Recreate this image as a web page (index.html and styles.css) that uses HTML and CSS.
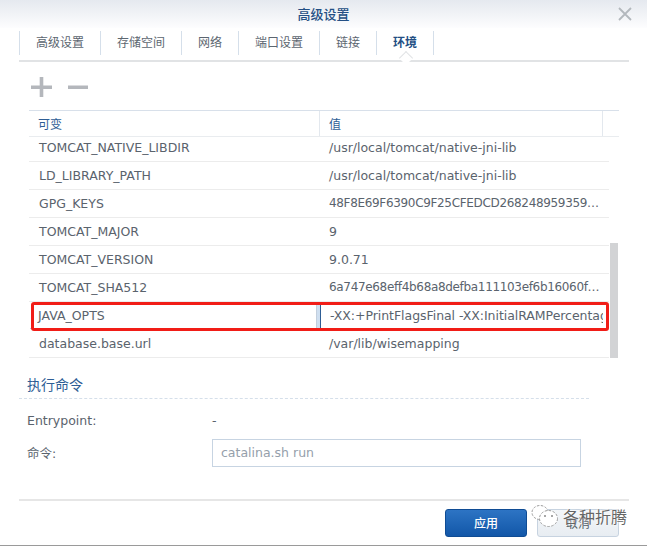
FILE: index.html
```html
<!DOCTYPE html>
<html lang="zh">
<head>
<meta charset="utf-8">
<title>高级设置</title>
<link rel="stylesheet" href="styles.css">
</head>
<body>
<div class="dialog">
  <header class="titlebar">
    <span class="title">高级设置</span>
    <svg class="close" width="14" height="14" viewBox="0 0 14 14"><path d="M1 1L13 13M13 1L1 13" stroke="#b3b8bd" stroke-width="1.800" fill="none"/></svg>
  </header>
  <nav class="tabs">
    <span class="tab">高级设置</span>
    <span class="tab">存储空间</span>
    <span class="tab">网络</span>
    <span class="tab">端口设置</span>
    <span class="tab">链接</span>
    <span class="tab active">环境</span>
  </nav>
  <div class="toolbar">
    <svg width="22" height="20" viewBox="0 0 22 20"><path d="M0 8.500h21v3.500H0zM8.700 0h3.600v20H8.700z" fill="#b4b7bc"/></svg>
    <svg width="22" height="20" viewBox="0 0 22 20"><path d="M1 8.500h20v3.500H1z" fill="#b4b7bc"/></svg>
  </div>
  <section class="grid">
    <div class="grid-head">
      <span class="hcell hname">可变</span>
      <span class="hcell hvalue">值</span>
      <span class="hcell hpad"></span>
    </div>
    <div class="grid-body">
      <div class="rows">
        <div class="row first"><span class="cell name">TOMCAT_NATIVE_LIBDIR</span><span class="cell value">/usr/local/tomcat/native-jni-lib</span></div>
        <div class="row"><span class="cell name">LD_LIBRARY_PATH</span><span class="cell value">/usr/local/tomcat/native-jni-lib</span></div>
        <div class="row"><span class="cell name">GPG_KEYS</span><span class="cell value hex">48F8E69F6390C9F25CFEDCD268248959359E722B A9C5DF4D22E99998D9875A5110C01C5A2F6059E7</span></div>
        <div class="row"><span class="cell name">TOMCAT_MAJOR</span><span class="cell value">9</span></div>
        <div class="row"><span class="cell name">TOMCAT_VERSION</span><span class="cell value">9.0.71</span></div>
        <div class="row"><span class="cell name">TOMCAT_SHA512</span><span class="cell value hex">6a747e68eff4b68a8defba111103ef6b16060f7d8e4b1d1c2e5a4b3f09d7c6a1</span></div>
        <div class="row editing">
          <span class="edit edit-name">JAVA_OPTS</span>
          <span class="edit-gap"></span>
          <span class="edit edit-value">-XX:+PrintFlagsFinal -XX:InitialRAMPercentage=70 -XX:MaxRAMPercentage=70</span>
          <span class="highlight"></span>
        </div>
        <div class="row"><span class="cell name">database.base.url</span><span class="cell value">/var/lib/wisemapping</span></div>
      </div>
      <div class="scrolltrack"><div class="scrollthumb"></div></div>
    </div>
  </section>
  <h2 class="section-title">执行命令</h2>
  <div class="form">
    <div class="form-row entry"><span class="label">Entrypoint:</span><span class="static">-</span></div>
    <div class="form-row cmd"><span class="label cmd-label">命令:</span><span class="input">catalina.sh run</span></div>
  </div>
  <footer class="footer">
    <span class="btn primary">应用</span>
    <span class="btn">取消</span>
    <div class="watermark">
      <svg width="28" height="24" viewBox="0 0 28 24"><g fill="#fff" stroke="#9b9b9b" stroke-width="1" stroke-dasharray="2.500 1.500"><ellipse cx="9" cy="8.500" rx="8" ry="7"/><ellipse cx="17.500" cy="14.500" rx="9" ry="8"/></g><circle cx="14" cy="12" r="1" fill="#8a8a8a"/><circle cx="21" cy="12" r="1" fill="#8a8a8a"/></svg>
      <span class="wm-text">各种折腾</span>
    </div>
  </footer>
</div>
</body>
</html>
```
FILE: styles.css
```css
* { box-sizing: border-box; }
html, body { margin: 0; padding: 0; }
body {
  width: 647px; height: 546px; overflow: hidden; background: #fff;
  font-family: "DejaVu Sans", "Noto Sans CJK SC", sans-serif;
  font-size: 12.500px; color: #5a636d;
}
.dialog { position: relative; width: 647px; height: 546px; border-bottom: 1px solid #9a9a9a; overflow: hidden; }
.titlebar {
  height: 28px; display: flex; justify-content: center; align-items: center; position: relative;
  background: linear-gradient(#e5e9ef, #fdfdfe);
  padding-bottom: 2px;
}
.title { font-size: 13px; color: #244f84; font-weight: 500; font-family: "Noto Sans CJK SC", sans-serif; }
.close { position: absolute; left: 618px; top: 7px; }
.tabs {
  margin: 3px 18px 0 19px; height: 31px; padding-bottom: 7px; display: flex;
  border-bottom: 2px solid #e1e3e5; position: relative;
}
.tab {
  height: 24px; line-height: 22px; padding: 0 16px; border-left: 1px solid #d5dfea;
  font-family: "Noto Sans CJK SC", sans-serif; font-size: 12px; color: #5c6670;
}
.tab.active { color: #244f84; font-weight: 700; border-right: 1px solid #d5dfea; position: relative; }
.tab.active::after {
  content: ""; position: absolute; left: 24px; bottom: -8px; width: 9px; height: 9px;
  background: #fff; border-left: 1px solid #e1e3e5; border-top: 1px solid #e1e3e5;
  transform: rotate(45deg);
}
.toolbar { margin: 15px 0 0 31px; height: 20px; display: flex; gap: 14px; }
.grid { margin: 13px 28px 0 29px; }
.grid-head { display: flex; height: 27px; border-top: 1px solid #d8e0ea; border-bottom: 1px solid #e9ecef; }
.hcell { font-family: "Noto Sans CJK SC", sans-serif; font-size: 12px; color: #2e5d95; line-height: 25px; padding-left: 9px; border-right: 1px solid #e3e8ee; }
.hname { width: 291px; }
.hvalue { width: 283px; }
.hpad { flex: 1; border-right: 0; }
.grid-body { display: flex; height: 221px; }
.rows { width: 580px; }
.row { display: flex; height: 28px; border-bottom: 1px solid #ececec; line-height: 27px; position: relative; }
.row.first { height: 25px; line-height: 21px; }
.cell { display: block; white-space: nowrap; overflow: hidden; text-overflow: ellipsis; padding: 0 6px 0 10px; }
.cell.name { width: 290px; }
.cell.value { width: 290px; }
.cell.hex { font-size: 12px; letter-spacing: -0.330px; }
.row.editing { border-bottom: 0; }
.edit { display: block; height: 27px; background: #fff; white-space: nowrap; overflow: hidden; line-height: 27px; border-bottom: 1px solid #c3cfdd; }
.edit-name { width: 287px; margin-left: 1px; padding-left: 8px; border-right: 1px solid #c3cfdd; }
.edit-gap { width: 4px; height: 27px; background: #cfdff0; border-right: 1px solid #2e5d95; }
.edit-value { width: 282px; padding-left: 9px; letter-spacing: -0.050px; }
.highlight { position: absolute; left: 2px; top: 0; width: 578px; height: 29px; border: 3px solid #f11d17; border-radius: 3px; pointer-events: none; }
.scrolltrack { width: 8px; margin-left: 1px; position: relative; }
.scrollthumb { position: absolute; left: 0; bottom: 0; width: 8px; height: 115px; background: #d2d3d5; }
.section-title { margin: 15px 0 0 27px; font-family: "Noto Sans CJK SC", sans-serif; font-size: 14px; font-weight: 400; color: #2e5d95; line-height: 22px; height: 25px; }
.form { margin: 0 0 0 19px; width: 570px; border-top: 1px dashed #d5dfea; padding: 13px 0 0 8px; }
.form-row { display: flex; align-items: center; }
.entry { height: 16px; }
.cmd { margin-top: 11px; height: 28px; }
.label { width: 185px; }
.cmd-label { margin-bottom: 2px; }
.input { width: 369px; height: 28px; line-height: 26px; padding-left: 8px; border: 1px solid #c7d4e2; color: #95a0ab; }
.footer { margin: 32px 18px 0 19px; border-top: 2px solid #e6e6e6; padding: 8px 10px 0 426px; display: flex; gap: 10px; position: relative; }
.btn { width: 82px; height: 28px; border: 1px solid #c7d3e0; border-radius: 3px; background: linear-gradient(#f3f6f9, #e8edf2); color: #505a64; text-align: center; line-height: 25px; font-size: 12px; font-family: "Noto Sans CJK SC", sans-serif; }
.btn.primary { background: linear-gradient(#2d74c4, #1257a8); border-color: #0f4c94; color: #fff; font-weight: 500; }
.watermark { position: absolute; left: 512px; top: 2px; display: flex; align-items: center; gap: 4px; height: 26px; }
.wm-text { font-family: "Noto Sans CJK SC", sans-serif; font-size: 16px; color: #666; text-shadow: 0 0 2px #fff, 0 0 2px #fff; white-space: nowrap; }
```
